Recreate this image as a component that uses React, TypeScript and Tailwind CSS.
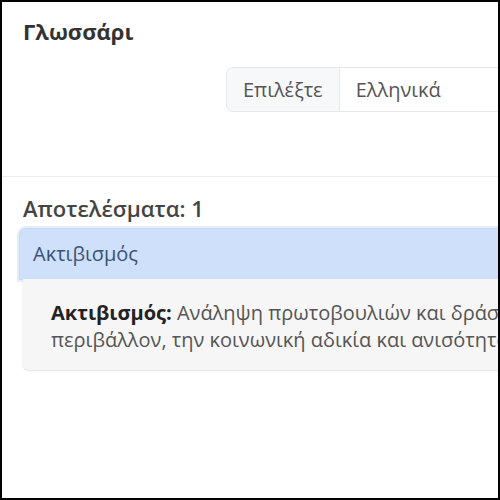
import React from "react";

export default function App() {
  return (
    <div className="w-[500px] h-[500px] overflow-hidden bg-white border-2 border-black box-border" style={{ fontFamily: '"Open Sans", "Noto Sans", sans-serif' }}>
      <div className="w-[760px]">
        <div className="pl-[21px] pt-[15px]">
          <h1 className="text-[22px] font-bold text-[#333] leading-[28px]">Γλωσσάρι</h1>
        </div>
        <div className="pl-[224px] pt-[22px]">
          <div className="flex h-[45px] text-[20px] text-[#555]">
            <div className="flex items-center px-[16px] bg-[#f7f8f9] border border-[#e6e8ea] rounded-l-[7px]">Επιλέξτε</div>
            <div className="flex items-center pl-[16px] w-[300px] bg-white border border-l-0 border-[#e6e8ea]">Ελληνικά</div>
          </div>
        </div>
        <div className="mt-[64px] border-t border-[#ececec]" />
        <div className="pl-[21px] pt-[17px]">
          <div className="text-[22px] font-semibold text-[#444] leading-[28px]">Αποτελέσματα: 1</div>
        </div>
        <div className="pl-[18px] pt-[7px] pr-[10px]">
          <div className="h-[50px] flex items-center pl-[13px] bg-[#cfe0fb] rounded-t-[6px] shadow-[0_0_0_1px_#c6d9f7,0_0_0_3px_#e4edfb] text-[20px] text-[#3a5478]">Ακτιβισμός</div>
          <div className="ml-[3px] bg-[#f6f6f6] rounded-b-[6px] shadow-[0_1px_2px_rgba(0,0,0,0.12)] pl-[28px] pt-[20px] pb-[17px] text-[20px] leading-[27px] text-[#555] whitespace-nowrap">
            <b className="text-[#222] font-bold">Ακτιβισμός:</b> Ανάληψη πρωτοβουλιών και δράσεων με σκοπό την προστασία του
            <br />
            περιβάλλον, την κοινωνική αδικία και ανισότητα.
          </div>
        </div>
      </div>
    </div>
  );
}
